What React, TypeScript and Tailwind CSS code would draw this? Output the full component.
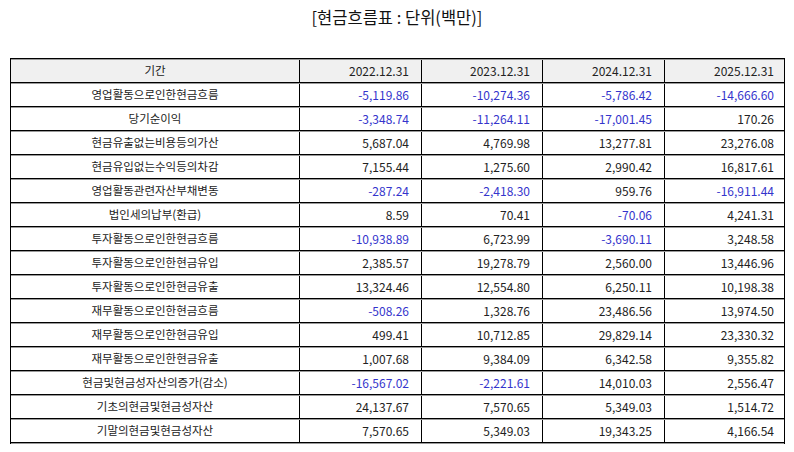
import React from "react";

const rows: [string, string[]][] = [
  ["영업활동으로인한현금흐름", ["-5,119.86", "-10,274.36", "-5,786.42", "-14,666.60"]],
  ["당기순이익", ["-3,348.74", "-11,264.11", "-17,001.45", "170.26"]],
  ["현금유출없는비용등의가산", ["5,687.04", "4,769.98", "13,277.81", "23,276.08"]],
  ["현금유입없는수익등의차감", ["7,155.44", "1,275.60", "2,990.42", "16,817.61"]],
  ["영업활동관련자산부채변동", ["-287.24", "-2,418.30", "959.76", "-16,911.44"]],
  ["법인세의납부(환급)", ["8.59", "70.41", "-70.06", "4,241.31"]],
  ["투자활동으로인한현금흐름", ["-10,938.89", "6,723.99", "-3,690.11", "3,248.58"]],
  ["투자활동으로인한현금유입", ["2,385.57", "19,278.79", "2,560.00", "13,446.96"]],
  ["투자활동으로인한현금유출", ["13,324.46", "12,554.80", "6,250.11", "10,198.38"]],
  ["재무활동으로인한현금흐름", ["-508.26", "1,328.76", "23,486.56", "13,974.50"]],
  ["재무활동으로인한현금유입", ["499.41", "10,712.85", "29,829.14", "23,330.32"]],
  ["재무활동으로인한현금유출", ["1,007.68", "9,384.09", "6,342.58", "9,355.82"]],
  ["현금및현금성자산의증가(감소)", ["-16,567.02", "-2,221.61", "14,010.03", "2,556.47"]],
  ["기초의현금및현금성자산", ["24,137.67", "7,570.65", "5,349.03", "1,514.72"]],
  ["기말의현금및현금성자산", ["7,570.65", "5,349.03", "19,343.25", "4,166.54"]],
];

const headers = ["2022.12.31", "2023.12.31", "2024.12.31", "2025.12.31"];

function Row({ label, vals, header }: { label: string; vals: string[]; header?: boolean }) {
  return (
    <>
      <div
        className={
          header
            ? "grid grid-cols-[289px_122px_121px_122px_121px] h-[22px] bg-[#f0f0f0]"
            : "grid grid-cols-[289px_122px_121px_122px_121px] h-[22px]"
        }
      >
        <div className="border-r border-black flex items-center justify-center text-[11.5px]">{label}</div>
        {vals.map((v, i) => (
          <div
            key={i}
            className={
              (i < 3 ? "border-r border-black " : "") +
              (!header && v.startsWith("-") ? "text-[#3434cc] " : "") +
              "flex items-center justify-end pr-[12px] text-[12px]"
            }
          >
            {v}
          </div>
        ))}
      </div>
      <div className="h-[2px] border-t border-black bg-[#9a9a9a]" />
    </>
  );
}

export default function App() {
  return (
    <div
      className="w-[794px] h-[452px] bg-white text-[#222]"
      style={{ fontFamily: '"Noto Sans CJK KR", "Noto Sans", sans-serif' }}
    >
      <div className="h-[35px] flex items-center justify-center text-[16.5px] text-[#111]">
        [현금흐름표 : 단위(백만)]
      </div>
      <div className="pt-[23px] px-[10px]">
        <div className="w-[775px] border-l border-r border-black leading-none">
          <div className="h-[2px] border-t border-black bg-[#9a9a9a]" />
          <Row label="기간" vals={headers} header />
          {rows.map(([label, vals]) => (
            <Row key={label} label={label} vals={vals} />
          ))}
        </div>
      </div>
    </div>
  );
}
